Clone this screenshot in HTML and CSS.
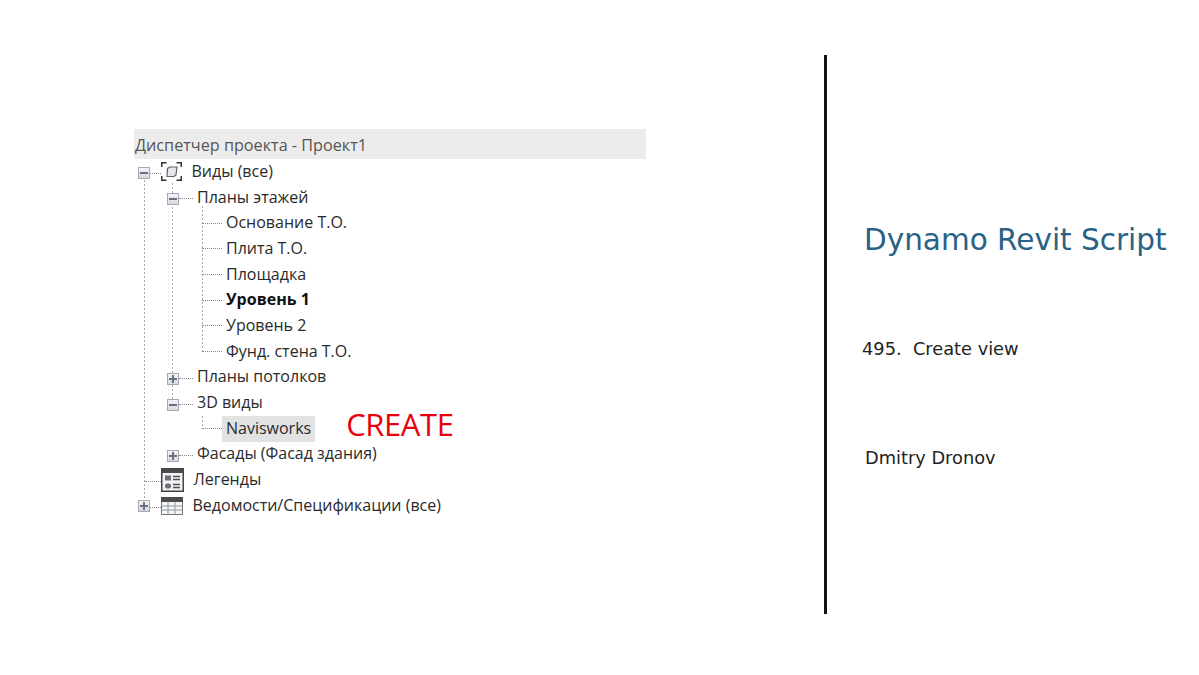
FILE: index.html
```html
<!DOCTYPE html>
<html lang="ru">
<head>
<meta charset="utf-8">
<title>Dynamo Revit Script</title>
<link rel="stylesheet" href="styles.css">
</head>
<body>
<main class="slide">
  <section class="browser">
    <header class="browser-title">Диспетчер проекта - Проект1</header>
    <div class="tree">
      <svg class="guides" width="120" height="360" viewBox="0 0 120 360" aria-hidden="true">
        <path d="M10.5 21V342M38.5 24V218M38.5 222V244M68.5 47V193M68.5 257V270"/>
      </svg>
      <div class="row lvl0">
        <span class="box minus"></span><span class="dash d-views"></span>
        <svg class="ico-views" width="21" height="19" viewBox="0 0 21 19"><path d="M.75 5V.75H5.5M15.5 .75H20.25V5M.75 14V18.25H5.5M15.5 18.25H20.25V14" fill="none" stroke="#333" stroke-width="1.5"/><path d="M6.5 6.5 9 5H16L15 13 13 14.5H6Z" fill="#e6e6ea" stroke="#5a6070" stroke-width="1.2"/></svg>
        <span class="label l-icon">Виды (все)</span>
      </div>
      <div class="row lvl1"><span class="box minus"></span><span class="dash"></span><span class="label">Планы этажей</span></div>
      <div class="row lvl2"><span class="dash d-leaf"></span><span class="label">Основание Т.О.</span></div>
      <div class="row lvl2"><span class="dash d-leaf"></span><span class="label">Плита Т.О.</span></div>
      <div class="row lvl2"><span class="dash d-leaf"></span><span class="label">Площадка</span></div>
      <div class="row lvl2"><span class="dash d-leaf"></span><span class="label strong">Уровень 1</span></div>
      <div class="row lvl2"><span class="dash d-leaf"></span><span class="label">Уровень 2</span></div>
      <div class="row lvl2"><span class="dash d-leaf"></span><span class="label">Фунд. стена Т.О.</span></div>
      <div class="row lvl1"><span class="box plus"></span><span class="dash"></span><span class="label">Планы потолков</span></div>
      <div class="row lvl1"><span class="box minus"></span><span class="dash"></span><span class="label">3D виды</span></div>
      <div class="row lvl2"><span class="dash d-leaf"></span><span class="label selected">Navisworks</span><span class="create">CREATE</span></div>
      <div class="row lvl1"><span class="box plus"></span><span class="dash"></span><span class="label">Фасады (Фасад здания)</span></div>
      <div class="row lvl0 no-box">
        <span class="dash d-legend"></span>
        <svg class="ico-legend" width="23" height="24" viewBox="0 0 23 24"><rect x=".75" y=".75" width="21.5" height="22.5" fill="#f2f2f2" stroke="#444" stroke-width="1.5"/><rect x="1" y="1" width="21" height="4" fill="#4c4c4c"/><rect x="4" y="7.5" width="6" height="5" fill="#6a6f78"/><rect x="4" y="15.5" width="6" height="5" rx="2" fill="#6a6f78"/><path d="M12 8.5H19M12 11.5H19M12 16.5H19M12 19.5H19" stroke="#4a4f58" stroke-width="1.3"/></svg>
        <span class="label l-icon">Легенды</span>
      </div>
      <div class="row lvl0">
        <span class="box plus box-table"></span><span class="dash d-views"></span>
        <svg class="ico-table" width="22" height="18" viewBox="0 0 22 18"><rect x=".5" y=".5" width="21" height="17" fill="#f5f5f5" stroke="#777"/><rect x="0" y="0" width="22" height="5" fill="#4c4c4c"/><path d="M1 9H21M1 13H21M7 5V17M14 5V17" stroke="#8a9aa8"/></svg>
        <span class="label l-icon">Ведомости/Спецификации (все)</span>
      </div>
    </div>
  </section>
  <div class="divider"></div>
  <section class="info">
    <h1 class="title">Dynamo Revit Script</h1>
    <p class="topic">495.&nbsp; Create view</p>
    <p class="author">Dmitry Dronov</p>
  </section>
</main>
</body>
</html>
```

FILE: styles.css
```css
html, body {
  margin: 0;
  padding: 0;
  background: #fff;
}
.slide {
  width: 1199px;
  height: 675px;
  display: flex;
  align-items: flex-start;
  overflow: hidden;
}
.browser {
  flex: none;
  width: 512px;
  margin: 129px 0 0 134px;
  font-family: "Open Sans", "Noto Sans", sans-serif;
  font-size: 16px;
  color: #2a2a2a;
}
.browser-title {
  height: 30px;
  line-height: 33px;
  background: #ececec;
  color: #555;
  font-size: 16.2px;
  padding-left: 1px;
  white-space: nowrap;
}
.tree {
  position: relative;
}
.guides {
  position: absolute;
  left: 0;
  top: 0;
}
.guides path {
  fill: none;
  stroke: #a8a8a8;
  stroke-width: 1;
  stroke-dasharray: 2 2;
}
.row {
  position: relative;
  height: 25.7px;
  display: flex;
  align-items: center;
  white-space: nowrap;
}
.lvl0 { padding-left: 4px; }
.lvl0.no-box { padding-left: 11px; }
.lvl1 { padding-left: 33px; }
.lvl2 { padding-left: 68px; }
.box {
  flex: none;
  position: relative;
  width: 12px;
  height: 12px;
  margin-top: 3px;
  box-sizing: border-box;
  border: 1px solid #a3a8b2;
  background: linear-gradient(#f4f4f7, #d6d9e0);
}
.box-table {
  margin-top: 1px;
}
.box::before {
  content: "";
  position: absolute;
  left: 1px;
  right: 1px;
  top: 4px;
  height: 2px;
  background: #6a7084;
}
.plus::after {
  content: "";
  position: absolute;
  top: 1px;
  bottom: 1px;
  left: 4px;
  width: 2px;
  background: #6a7084;
}
.dash {
  flex: none;
  width: 14px;
  border-top: 1px dotted #8a8a8a;
  margin-right: 0;
  margin-top: 2px;
}
.d-views { width: 11px; margin-top: 3px; }
.d-leaf { width: 20px; margin-top: 0; }
.d-legend { width: 16px; }
.ico-views, .ico-legend, .ico-table { flex: none; }
.label {
  padding: 0 4px;
  margin-bottom: 2px;
}
.l-icon { padding-left: 9.5px; }
.strong { font-weight: 700; color: #111; }
.selected {
  height: 26px;
  line-height: 24px;
  margin-bottom: 0;
  background: #e2e2e2;
}
.create {
  margin-left: 31px;
  margin-bottom: 10px;
  font-size: 31px;
  line-height: 26px;
  letter-spacing: -0.4px;
  color: #e8000f;
}
.divider {
  flex: none;
  width: 3px;
  height: 559px;
  margin: 55px 0 0 178px;
  background: #111;
}
.info {
  margin-left: 35px;
  font-family: "DejaVu Sans", Verdana, sans-serif;
  color: #222;
}
.title {
  margin: 220px 0 0 2px;
  font-size: 29.5px;
  line-height: 40px;
  font-weight: 400;
  color: #2a6286;
  white-space: nowrap;
}
.topic {
  margin: 79px 0 0;
  font-size: 17.8px;
  line-height: 20px;
  white-space: nowrap;
}
.author {
  margin: 89px 0 0 3px;
  font-size: 17.8px;
  line-height: 20px;
  white-space: nowrap;
}
```
